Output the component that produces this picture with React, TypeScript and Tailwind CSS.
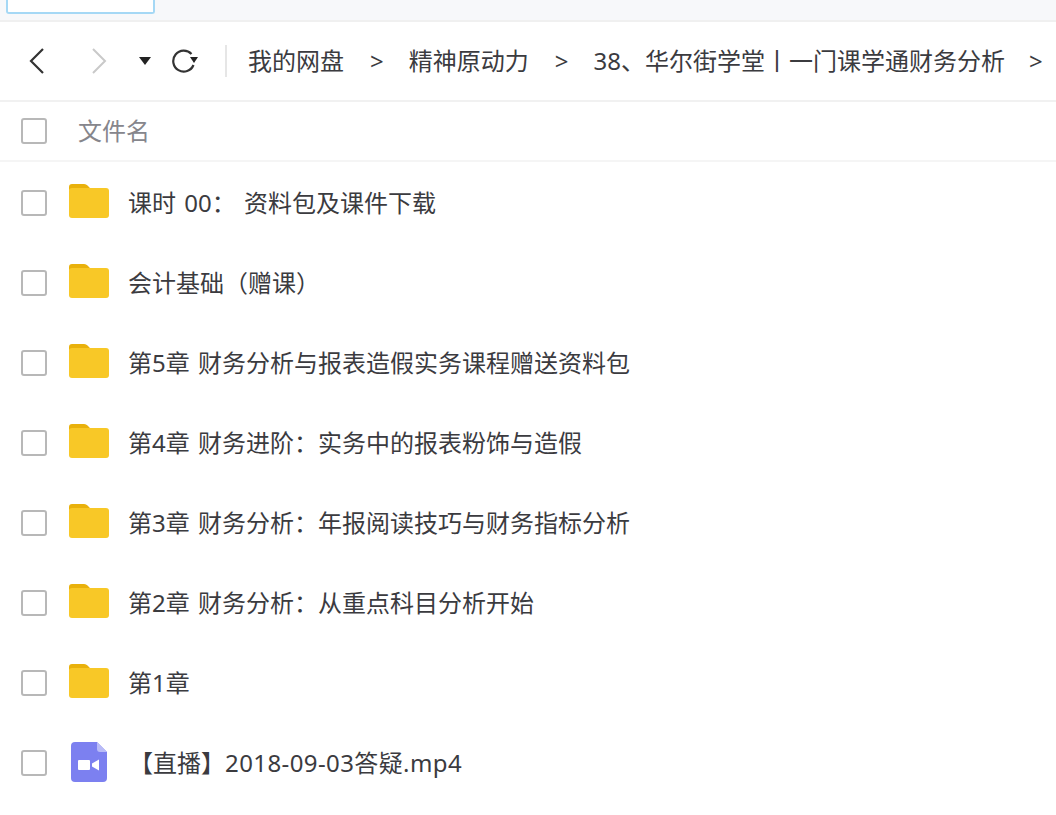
import React from "react";

const rows = [
  "课时 00： 资料包及课件下载",
  "会计基础（赠课）",
  "第5章 财务分析与报表造假实务课程赠送资料包",
  "第4章 财务进阶：实务中的报表粉饰与造假",
  "第3章 财务分析：年报阅读技巧与财务指标分析",
  "第2章 财务分析：从重点科目分析开始",
  "第1章",
];

function Check() {
  return <span className="block w-[26px] h-[26px] shrink-0 rounded-[3px] border-2 border-[#b8b8b8] bg-white" />;
}

function Folder() {
  return (
    <svg width="40" height="34" viewBox="0 0 40 34" className="shrink-0">
      <path d="M0 3a3 3 0 0 1 3-3h12c2 0 3 1 4 2l3 3H3a3 3 0 0 0-3 3z" fill="#e9b10c" />
      <path d="M0 7a3 3 0 0 1 3-3h34a3 3 0 0 1 3 3v24a3 3 0 0 1-3 3H3a3 3 0 0 1-3-3z" fill="#f8c827" />
    </svg>
  );
}

function Video() {
  return (
    <svg width="36" height="40" viewBox="0 0 36 40" className="shrink-0">
      <path d="M4 0h22l10 10v26a4 4 0 0 1-4 4H4a4 4 0 0 1-4-4V4a4 4 0 0 1 4-4z" fill="#7c80f0" />
      <path d="M26 0l10 10h-7a3 3 0 0 1-3-3z" fill="#b9bbf7" />
      <rect x="7" y="18" width="12" height="10" rx="1" fill="#fff" />
      <path d="M21 21.500l7-4v11l-7-4z" fill="#fff" />
    </svg>
  );
}

export default function App() {
  return (
    <div className="w-[1056px] h-[815px] overflow-hidden bg-white text-[24px] text-[#3b3b3f] font-['Noto_Sans','Noto_Sans_CJK_SC',sans-serif]">
      <div className="h-[22px] bg-[#f7f8fa] border-b-2 border-[#f0f0f0] pl-[6px]">
        <div className="w-[149px] h-[14px] bg-white border-2 border-t-0 border-[#a5d8f5] rounded-b-[3px]" />
      </div>
      <div className="h-[80px] flex items-center border-b-2 border-[#f1f1f1] whitespace-nowrap">
        <svg width="18" height="26" viewBox="0 0 18 26" className="ml-[28px] shrink-0" fill="none" stroke="#333" strokeWidth="2.200">
          <path d="M15 1 3 13l12 12" />
        </svg>
        <svg width="18" height="26" viewBox="0 0 18 26" className="ml-[44px] shrink-0" fill="none" stroke="#c9c9c9" strokeWidth="2">
          <path d="M3 1l12 12L3 25" />
        </svg>
        <svg width="12" height="8" viewBox="0 0 12 8" className="ml-[31px] shrink-0">
          <path d="M0 0h12L6 8z" fill="#222" />
        </svg>
        <svg width="26" height="24" viewBox="0 0 26 24" className="ml-[21px] shrink-0" fill="none">
          <path d="M19.500 5A10.500 10.500 0 1 0 21.500 16" stroke="#333" strokeWidth="2.200" />
          <path d="M18 8h8l-4 6z" fill="#222" />
        </svg>
        <span className="block w-[2px] h-[32px] ml-[27px] bg-[#e6e6e6] shrink-0" />
        <span className="ml-[21px]">我的网盘</span>
        <span className="ml-[26px]">&gt;</span>
        <span className="ml-[25px]">精神原动力</span>
        <span className="ml-[26px]">&gt;</span>
        <span className="ml-[25px]">38、华尔街学堂丨一门课学通财务分析</span>
        <span className="ml-[24px]">&gt;</span>
      </div>
      <div className="h-[60px] flex items-center border-b-2 border-[#f5f5f5] pl-[21px]">
        <Check />
        <span className="ml-[31px] text-[#86868c]">文件名</span>
      </div>
      <div className="pt-px">
        {rows.map((t) => (
          <div key={t} className="h-[80px] flex items-center pl-[21px]">
            <Check />
            <span className="ml-[22px] mb-[4px] flex"><Folder /></span>
            <span className="ml-[19px] whitespace-pre [word-spacing:2px]">{t}</span>
          </div>
        ))}
        <div className="h-[80px] flex items-center pl-[21px]">
          <Check />
          <span className="ml-[24px] mb-[2px] flex"><Video /></span>
          <span className="ml-[22px] whitespace-pre">【直播】<span className="tracking-[0.4px]">2018-09-03答疑.mp4</span></span>
        </div>
      </div>
    </div>
  );
}
